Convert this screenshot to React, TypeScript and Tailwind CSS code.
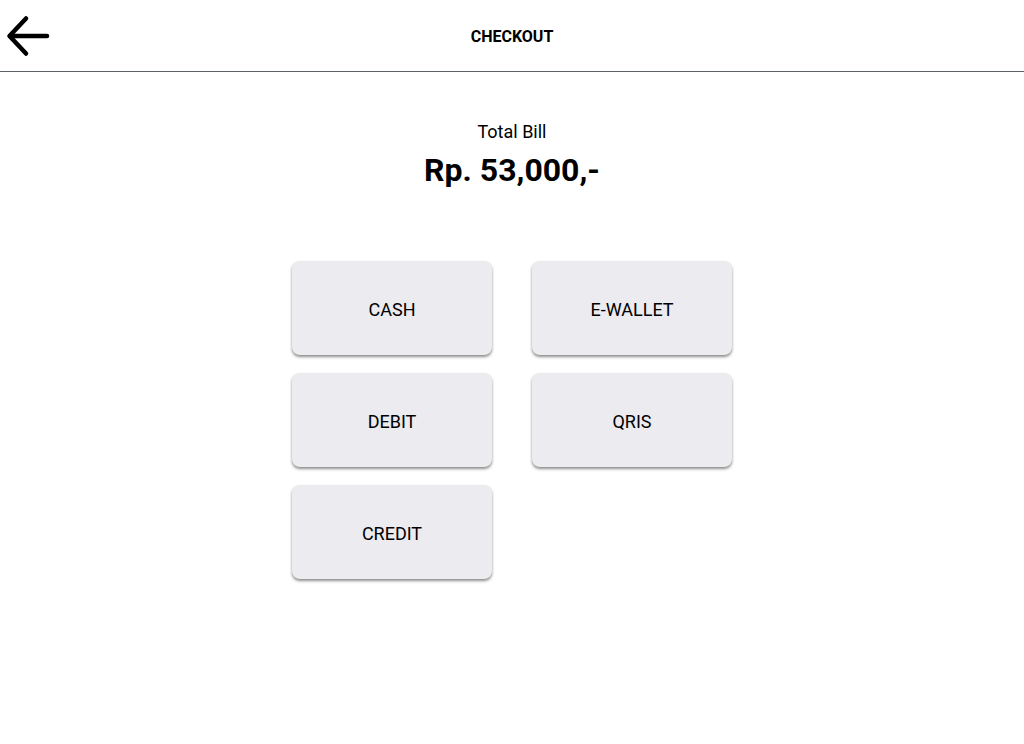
import React from "react";

const methods = ["CASH", "E-WALLET", "DEBIT", "QRIS", "CREDIT"];

export default function App() {
  return (
    <div className="w-[1024px] h-[744px] bg-white font-['Roboto',sans-serif] text-black">
      <header className="relative h-[72px] border-b border-[#5b6066] flex items-center justify-center">
        <button className="absolute left-[6px] top-[13px] w-[46px] h-[46px] flex items-center justify-center">
          <svg width="46" height="46" viewBox="0 0 46 46" fill="none" stroke="#000" strokeWidth="4.5" strokeLinecap="round" strokeLinejoin="round">
            <path d="M41 23H4" />
            <path d="M20 5.5L3.5 23L20 40.5" />
          </svg>
        </button>
        <h1 className="pt-[2px] text-[16px] leading-[20px] font-bold text-black">CHECKOUT</h1>
      </header>
      <main className="flex flex-col items-center">
        <div className="mt-[49px] text-[18px] leading-[22px] text-black">Total Bill</div>
        <div className="mt-[8px] text-[32px] leading-[38px] font-bold text-black">Rp. 53,000,-</div>
        <div className="mt-[72px] grid grid-cols-[200px_200px] gap-x-[40px] gap-y-[18px]">
          {methods.map((m) => (
            <button
              key={m}
              className="w-[200px] h-[94px] rounded-[8px] bg-[#ebebf0] shadow-[0_2px_3px_rgba(0,0,0,0.45)] flex items-center justify-center pt-[2px] text-[18px] text-black"
            >
              {m}
            </button>
          ))}
        </div>
      </main>
    </div>
  );
}
